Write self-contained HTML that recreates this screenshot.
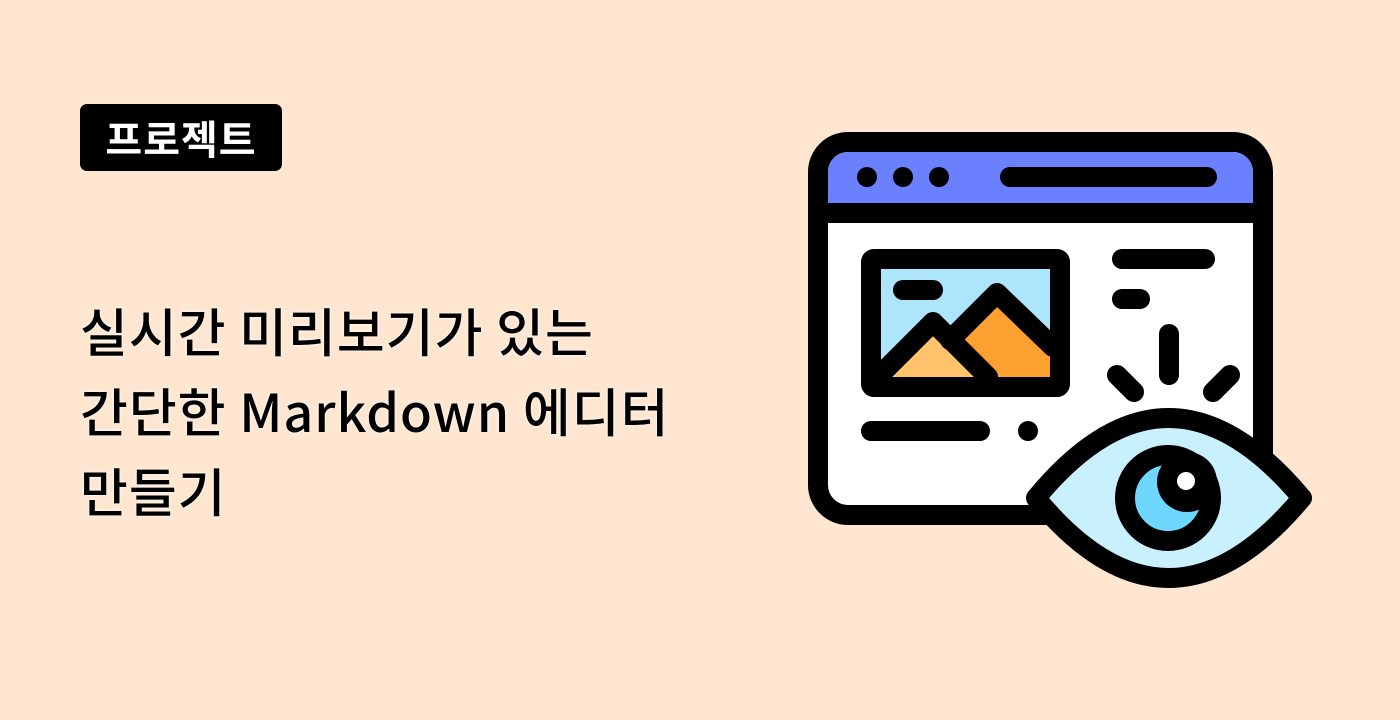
<!DOCTYPE html>
<html><head><meta charset="utf-8"><style>
html,body{margin:0;padding:0;}
body{width:1400px;height:720px;background:#FEE6D0;position:relative;overflow:hidden;font-family:"Liberation Sans","Noto Sans CJK KR",sans-serif;}
.badge{position:absolute;left:80px;top:104px;width:202px;height:67px;background:#000;border-radius:7px;color:#fff;font-weight:bold;font-size:40px;line-height:67px;text-align:center;font-family:"Noto Sans CJK KR",sans-serif;letter-spacing:1px;}
.title{position:absolute;left:80px;top:290px;font-size:52px;line-height:80px;color:#000;font-family:"Noto Sans CJK KR",sans-serif;font-weight:500;text-shadow:0 0 3px #fff;letter-spacing:1px;}
svg{position:absolute;left:0;top:0;}
</style></head><body>
<div class="badge">프로젝트</div>
<div class="title">실시간 미리보기가 있는<br>간단한 Markdown 에디터<br>만들기</div>
<svg width="1400" height="720" viewBox="0 0 1400 720">
<g stroke="#000" stroke-width="20" stroke-linecap="round" stroke-linejoin="round" fill="none">
<rect x="818" y="142" width="445" height="373" rx="30" fill="#fff"/>
<path d="M828,213 V172 a20,20 0 0 1 20,-20 H1233 a20,20 0 0 1 20,20 V203 H828Z" fill="#6B80FF" stroke="none"/>
<line x1="828" y1="213" x2="1253" y2="213"/>
<line x1="1010" y1="177" x2="1207" y2="177"/>
<rect x="871" y="259" width="189" height="128" rx="3" fill="#ADE5FD"/>
<path d="M881,377 L933,325 L985,377Z" fill="#FFC36B" stroke="none"/>
<path d="M955,347 L997,305 L1050,357 V377 H985Z" fill="#FEA02F" stroke="none"/>
<path d="M878,377 L933,322 L988,377"/>
<path d="M950,340 L997,293 L1053,347"/>
<line x1="903" y1="290" x2="933" y2="290"/>
<line x1="1122" y1="259" x2="1205" y2="259"/>
<line x1="1122" y1="299" x2="1140" y2="299"/>
<line x1="1169" y1="334" x2="1169" y2="375"/>
<line x1="1117" y1="375" x2="1134" y2="392"/>
<line x1="1230" y1="375" x2="1213" y2="392"/>
<line x1="871" y1="431" x2="980" y2="431"/>
</g>
<g fill="#000">
<circle cx="867" cy="177" r="10"/><circle cx="903" cy="177" r="10"/><circle cx="939" cy="177" r="10"/>
<circle cx="1028" cy="431" r="10"/>
</g>
<path d="M1036,498 Q1168,338 1302,498 Q1168,658 1036,498Z" fill="#C8F1FD" stroke="#000" stroke-width="20" stroke-linejoin="round"/>
<circle cx="1168" cy="498" r="43" fill="#6FD6FD" stroke="#000" stroke-width="20"/>
<circle cx="1187" cy="482" r="30" fill="#000"/>
<circle cx="1186" cy="481" r="9" fill="#fff"/>
</svg>
</body></html>
